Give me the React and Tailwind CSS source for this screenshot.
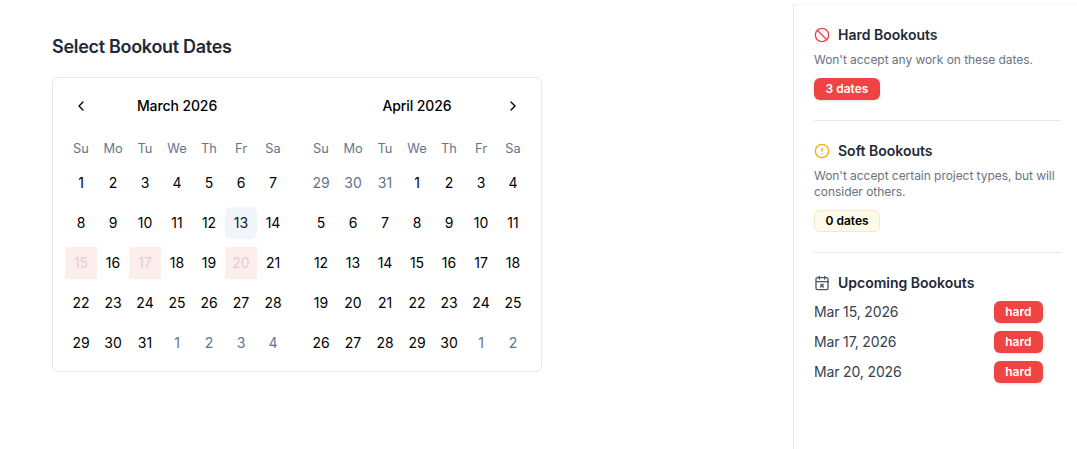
import { Ban, ChevronLeft, ChevronRight, CircleAlert, CalendarX } from 'lucide-react';

const weekdays = ['Su', 'Mo', 'Tu', 'We', 'Th', 'Fr', 'Sa'];

const march = [
  [1, 2, 3, 4, 5, 6, 7],
  [8, 9, 10, 11, 12, 13, 14],
  [15, 16, 17, 18, 19, 20, 21],
  [22, 23, 24, 25, 26, 27, 28],
  [29, 30, 31, 1, 2, 3, 4],
];

const april = [
  [29, 30, 31, 1, 2, 3, 4],
  [5, 6, 7, 8, 9, 10, 11],
  [12, 13, 14, 15, 16, 17, 18],
  [19, 20, 21, 22, 23, 24, 25],
  [26, 27, 28, 29, 30, 1, 2],
];

const upcoming = ['Mar 15, 2026', 'Mar 17, 2026', 'Mar 20, 2026'];

function Day({ day, outside, hard, today }) {
  let cls = 'text-black';
  if (outside) cls = 'text-[#64748b]';
  if (hard) cls = 'bg-[#fdeeee] text-[#e6cdd0]';
  if (today) cls = 'bg-[#f1f5f9] text-[#0f172a] rounded-md';
  return <div className={`w-8 h-8 flex items-center justify-center text-sm ${cls}`}>{day}</div>;
}

function Month({ title, rows, left, right, isMarch }) {
  return (
    <div className="w-56">
      <div className="relative h-7 mt-[2px] flex items-center justify-center">
        {left && <ChevronLeft className="absolute left-2 w-4 h-4 text-black" />}
        <span className="text-sm font-medium tracking-[-0.1px] text-black">{title}</span>
        {right && <ChevronRight className="absolute right-2 w-4 h-4 text-black" />}
      </div>
      <div className="flex mt-[18px]">
        {weekdays.map((d) => (
          <div key={d} className="w-8 h-[21px] flex items-center justify-center text-[12.8px] text-[#64748b]">{d}</div>
        ))}
      </div>
      <div className="mt-2 flex flex-col gap-2">
        {rows.map((row, i) => (
          <div key={i} className="flex">
            {row.map((day) => {
              const outside = (i === 0 && day > 7) || (i === rows.length - 1 && day < 7);
              return (
                <Day
                  key={day}
                  day={day}
                  outside={outside}
                  hard={isMarch && [15, 17, 20].includes(day)}
                  today={isMarch && day === 13}
                />
              );
            })}
          </div>
        ))}
      </div>
    </div>
  );
}

function SectionTitle({ icon, children }) {
  return (
    <div className="flex items-center gap-2">
      {icon}
      <h3 className="text-sm font-semibold text-[#1f2937]">{children}</h3>
    </div>
  );
}

export default function App() {
  return (
    <div className="w-[1077px] h-[449px] bg-white flex pt-1 overflow-hidden font-['Inter',sans-serif]">
      <main className="w-[793px] pl-[52px] pt-[29px]">
        <h2 className="text-lg font-semibold leading-7 tracking-[-0.3px] text-[#1f2937]">Select Bookout Dates</h2>
        <div className="mt-4 w-[490px] h-[295px] border border-[#e5e7eb] rounded-md p-3 flex gap-4">
          <Month title="March 2026" rows={march} left isMarch />
          <Month title="April 2026" rows={april} right />
        </div>
      </main>

      <aside className="w-[284px] border-l border-t border-l-[#e5e7eb] border-t-[#f3f4f6] pl-5 pr-4 pt-[20px]">
        <section className="pb-5 border-b border-[#e5e7eb]">
          <SectionTitle icon={<Ban className="w-4 h-4 text-[#ef4444]" />}>Hard Bookouts</SectionTitle>
          <p className="mt-[7px] text-xs leading-4 tracking-[-0.05px] text-[#6b7280]">Won't accept any work on these dates.</p>
          <span className="mt-[10px] inline-flex h-[22px] items-center rounded-md bg-[#ef4444] px-[11.5px] text-xs font-semibold text-white shadow-sm">3 dates</span>
        </section>

        <section className="py-5 border-b border-[#e5e7eb]">
          <SectionTitle icon={<CircleAlert className="w-4 h-4 text-[#eab308]" />}>Soft Bookouts</SectionTitle>
          <p className="mt-[7px] text-xs leading-4 tracking-[-0.05px] text-[#6b7280]">Won't accept certain project types, but will consider others.</p>
          <span className="mt-[10px] inline-flex h-[22px] items-center rounded-md border border-[#f1ecc8] bg-[#fefce8] px-[10.5px] text-xs font-semibold text-black">0 dates</span>
        </section>

        <section className="pt-5">
          <SectionTitle icon={<CalendarX className="w-4 h-4 text-[#4b5563]" />}>Upcoming Bookouts</SectionTitle>
          <div className="mt-2 flex flex-col gap-2 pr-[18px]">
            {upcoming.map((d) => (
              <div key={d} className="flex items-center justify-between">
                <span className="text-sm tracking-[-0.15px] text-[#374151]">{d}</span>
                <span className="inline-flex h-[22px] items-center rounded-md bg-[#ef4444] px-[11.5px] text-xs font-semibold text-white shadow-sm">hard</span>
              </div>
            ))}
          </div>
        </section>
      </aside>
    </div>
  );
}
